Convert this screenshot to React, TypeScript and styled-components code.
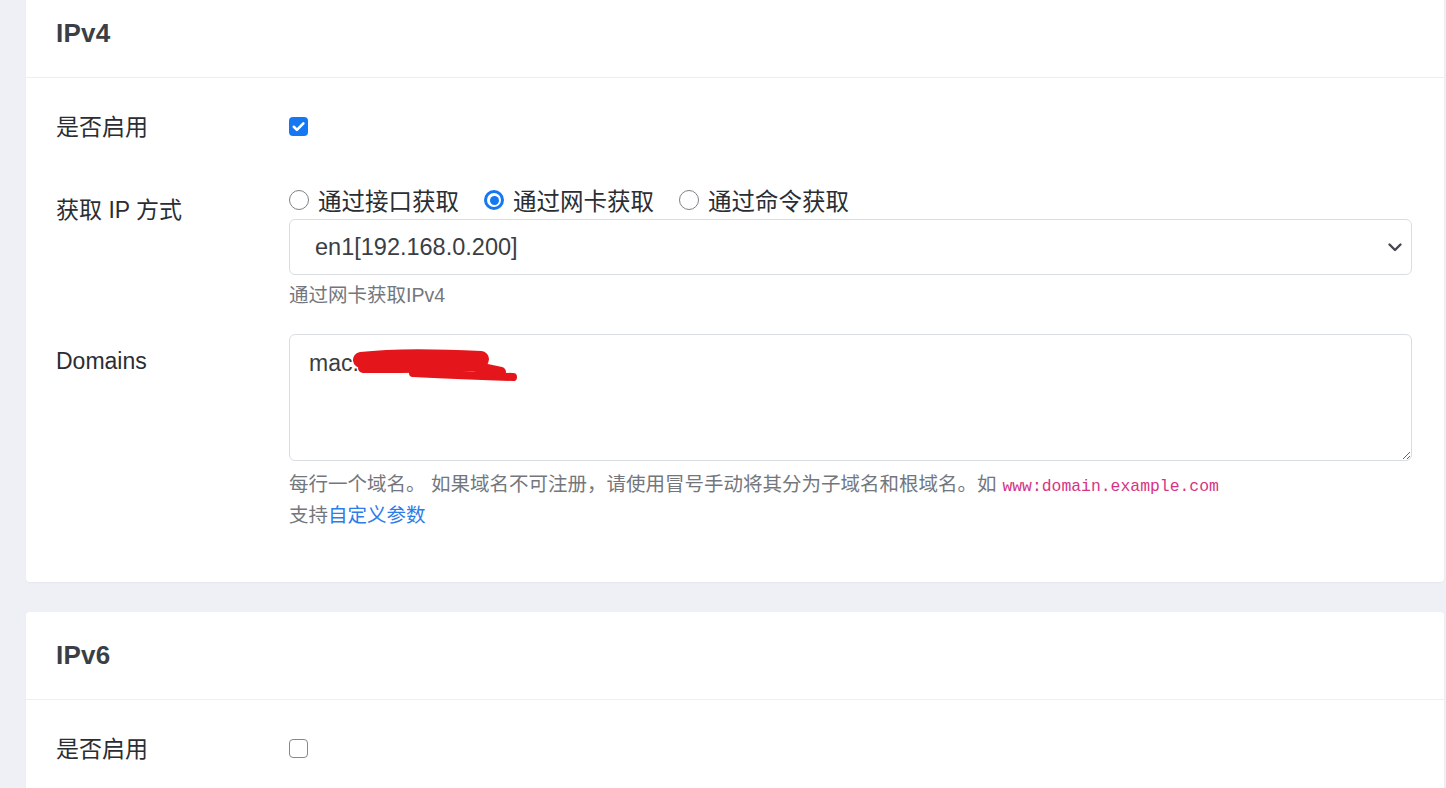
import React from "react";
import styled, { createGlobalStyle } from "styled-components";

const GlobalStyle = createGlobalStyle`
  html, body { margin: 0; padding: 0; }
  body {
    background: #eef0f5;
    font-family: "Liberation Sans", "Noto Sans CJK SC", sans-serif;
    color: #2b2f33;
    overflow: hidden;
  }
`;

const Page = styled.div`
  display: flex;
  flex-direction: column;
  gap: 30px;
  padding: 0 2px 0 26px;
  margin-top: -10px;
  height: 798px;
  box-sizing: border-box;
`;

const Card = styled.section<{ $fill?: boolean }>`
  background: #ffffff;
  border-radius: 4px;
  box-shadow: 0 1px 2px rgba(20, 30, 60, 0.04);
  flex: ${(p) => (p.$fill ? "1 1 auto" : "0 0 auto")};
  min-height: 0;
  overflow: hidden;
  ${(p) => (p.$fill ? "border-bottom-left-radius: 0; border-bottom-right-radius: 0;" : "")}
`;

const CardHeader = styled.div`
  height: 87px;
  display: flex;
  align-items: center;
  padding: 0 30px;
  border-bottom: 1px solid #eceef2;
`;

const Title = styled.h5`
  margin: 0;
  font-size: 26px;
  font-weight: 700;
  color: #3a3f46;
  letter-spacing: 0.2px;
`;

const CardBody = styled.div<{ $pb?: number }>`
  padding: 22px 32px ${(p) => p.$pb ?? 52}px 30px;
  display: flex;
  flex-direction: column;
  gap: 24px;
`;

const Row = styled.div<{ $minH?: number }>`
  display: grid;
  grid-template-columns: 233px 1fr;
  min-height: ${(p) => p.$minH ?? 0}px;
`;

const Label = styled.div`
  font-size: 23px;
  line-height: 34px;
  padding-top: 10px;
  color: #2a2e33;
`;

const Control = styled.div`
  display: flex;
  flex-direction: column;
  min-width: 0;
`;

const CheckLine = styled.div`
  height: 34px;
  margin-top: 9px;
  display: flex;
  align-items: center;
`;

const CheckBox = styled.span<{ $on?: boolean }>`
  width: 19px;
  height: 19px;
  box-sizing: border-box;
  border-radius: 4px;
  display: inline-flex;
  align-items: center;
  justify-content: center;
  background: ${(p) => (p.$on ? "#1677f2" : "#fff")};
  border: ${(p) => (p.$on ? "none" : "1.5px solid #85888d")};
`;

const RadioGroup = styled.div`
  display: flex;
  align-items: center;
  height: 34px;
`;

const RadioItem = styled.label`
  display: inline-flex;
  align-items: center;
  gap: 9px;
  margin-right: 25px;
  font-size: 23.5px;
  color: #2a2e33;
`;

const RadioDot = styled.span<{ $on?: boolean }>`
  width: 20px;
  height: 20px;
  box-sizing: border-box;
  border-radius: 50%;
  display: inline-flex;
  align-items: center;
  justify-content: center;
  border: ${(p) => (p.$on ? "3px solid #1677f2" : "1.5px solid #7e8186")};
  background: #fff;
  &::after {
    content: "";
    display: ${(p) => (p.$on ? "block" : "none")};
    width: 9px;
    height: 9px;
    border-radius: 50%;
    background: #1677f2;
  }
`;

const Select = styled.div`
  margin-top: 2px;
  height: 56px;
  box-sizing: border-box;
  border: 1px solid #dadde2;
  border-radius: 6px;
  display: flex;
  align-items: center;
  justify-content: space-between;
  padding: 0 8px 0 25px;
  font-size: 23.5px;
  color: #3a3e44;
`;

const Help = styled.div<{ $mt?: number }>`
  margin-top: ${(p) => p.$mt ?? 6}px;
  font-size: 19.5px;
  line-height: 29px;
  color: #73777d;
`;

const Code = styled.code`
  font-family: "Liberation Mono", "DejaVu Sans Mono", monospace;
  font-size: 16.4px;
  color: #d63384;
  margin-left: 6px;
`;

const Link = styled.a`
  color: #2b7de9;
  text-decoration: none;
`;

const AreaWrap = styled.div`
  position: relative;
`;

const TextArea = styled.textarea`
  display: block;
  width: 100%;
  height: 127px;
  box-sizing: border-box;
  border: 1px solid #dadde2;
  border-radius: 6px;
  padding: 11px 19px;
  font-family: "Liberation Sans", "Noto Sans CJK SC", sans-serif;
  font-size: 23px;
  line-height: 34px;
  color: #3a3e44;
  resize: vertical;
  outline: none;
`;

const Redact = styled.svg`
  position: absolute;
  left: 64px;
  top: 14px;
  width: 166px;
  height: 36px;
  pointer-events: none;
`;

const Check = () => (
  <svg width="15" height="15" viewBox="0 0 16 16">
    <path d="M3 8.3l3.3 3.3L13.2 4.6" fill="none" stroke="#fff" strokeWidth="2.8" strokeLinecap="round" strokeLinejoin="round" />
  </svg>
);

const Chevron = () => (
  <svg width="16" height="16" viewBox="0 0 16 16">
    <path d="M2.5 5.5L8 11l5.5-5.5" fill="none" stroke="#44484e" strokeWidth="2.4" strokeLinecap="round" strokeLinejoin="round" />
  </svg>
);

export default function App() {
  return (
    <>
      <GlobalStyle />
      <Page>
        <Card>
          <CardHeader>
            <Title>IPv4</Title>
          </CardHeader>
          <CardBody>
            <Row $minH={59}>
              <Label>是否启用</Label>
              <Control>
                <CheckLine>
                  <CheckBox $on>
                    <Check />
                  </CheckBox>
                </CheckLine>
              </Control>
            </Row>
            <Row>
              <Label>获取 IP 方式</Label>
              <Control>
                <RadioGroup>
                  <RadioItem>
                    <RadioDot />
                    通过接口获取
                  </RadioItem>
                  <RadioItem>
                    <RadioDot $on />
                    通过网卡获取
                  </RadioItem>
                  <RadioItem>
                    <RadioDot />
                    通过命令获取
                  </RadioItem>
                </RadioGroup>
                <Select>
                  <span>en1[192.168.0.200]</span>
                  <Chevron />
                </Select>
                <Help>通过网卡获取IPv4</Help>
              </Control>
            </Row>
            <Row>
              <Label>Domains</Label>
              <Control>
                <AreaWrap>
                  <TextArea readOnly defaultValue="mac:" />
                  <Redact viewBox="0 0 166 36">
                    <path d="M8 12 C 40 8, 90 9, 128 11" fill="none" stroke="#e5161b" strokeWidth="16" strokeLinecap="round" />
                    <path d="M10 20 C 50 20, 90 20, 130 18" fill="none" stroke="#e5161b" strokeWidth="10" strokeLinecap="round" />
                    <path d="M60 25 C 100 27, 130 28, 160 29" fill="none" stroke="#e5161b" strokeWidth="8" strokeLinecap="round" />
                    <path d="M110 16 L 148 24" fill="none" stroke="#e5161b" strokeWidth="10" strokeLinecap="round" />
                  </Redact>
                </AreaWrap>
                <Help $mt={9}>
                  每行一个域名。 如果域名不可注册，请使用冒号手动将其分为子域名和根域名。如
                  <Code>www:domain.example.com</Code>
                  <br />
                  支持<Link href="#">自定义参数</Link>
                </Help>
              </Control>
            </Row>
          </CardBody>
        </Card>
        <Card $fill>
          <CardHeader>
            <Title>IPv6</Title>
          </CardHeader>
          <CardBody $pb={0}>
            <Row $minH={59}>
              <Label>是否启用</Label>
              <Control>
                <CheckLine>
                  <CheckBox />
                </CheckLine>
              </Control>
            </Row>
          </CardBody>
        </Card>
      </Page>
    </>
  );
}
